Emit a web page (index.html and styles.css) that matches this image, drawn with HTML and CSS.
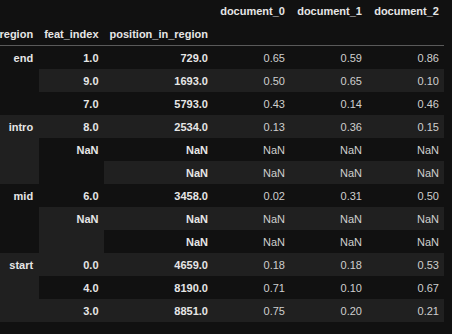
FILE: index.html
```html
<!DOCTYPE html>
<html>
<head>
<meta charset="utf-8">
<link rel="stylesheet" href="styles.css">
</head>
<body>
<table class="df">
  <thead>
    <tr>
      <th></th><th></th><th></th>
      <th class="doc">document_0</th><th class="doc">document_1</th><th class="doc">document_2</th>
    </tr>
    <tr>
      <th>region</th><th>feat_index</th><th>position_in_region</th>
      <th></th><th></th><th></th>
    </tr>
  </thead>
  <tbody>
    <tr><th rowspan="3">end</th><th>1.0</th><th>729.0</th><td>0.65</td><td>0.59</td><td>0.86</td></tr>
    <tr><th>9.0</th><th>1693.0</th><td>0.50</td><td>0.65</td><td>0.10</td></tr>
    <tr><th>7.0</th><th>5793.0</th><td>0.43</td><td>0.14</td><td>0.46</td></tr>
    <tr><th rowspan="3">intro</th><th>8.0</th><th>2534.0</th><td>0.13</td><td>0.36</td><td>0.15</td></tr>
    <tr><th rowspan="2">NaN</th><th>NaN</th><td>NaN</td><td>NaN</td><td>NaN</td></tr>
    <tr><th>NaN</th><td>NaN</td><td>NaN</td><td>NaN</td></tr>
    <tr><th rowspan="3">mid</th><th>6.0</th><th>3458.0</th><td>0.02</td><td>0.31</td><td>0.50</td></tr>
    <tr><th rowspan="2">NaN</th><th>NaN</th><td>NaN</td><td>NaN</td><td>NaN</td></tr>
    <tr><th>NaN</th><td>NaN</td><td>NaN</td><td>NaN</td></tr>
    <tr><th rowspan="3">start</th><th>0.0</th><th>4659.0</th><td>0.18</td><td>0.18</td><td>0.53</td></tr>
    <tr><th>4.0</th><th>8190.0</th><td>0.71</td><td>0.10</td><td>0.67</td></tr>
    <tr><th>3.0</th><th>8851.0</th><td>0.75</td><td>0.20</td><td>0.21</td></tr>
  </tbody>
</table>
</body>
</html>
```
FILE: styles.css
```css
html, body {
  margin: 0;
  background: #111111;
}
body {
  font-family: "Liberation Sans", Arial, sans-serif;
  font-size: 11px;
  color: #e0e0e0;
  overflow: hidden;
}
.df {
  border-collapse: collapse;
  border-spacing: 0;
  margin: -1px 0 0 -6px;
}
.df th, .df td {
  text-align: right;
  vertical-align: middle;
  padding: 0.5em;
  line-height: normal;
  white-space: nowrap;
}
.df th {
  font-weight: bold;
  color: #e6e6e6;
}
.df td {
  color: #cfcfcf;
}
.df th.doc {
  width: 66px;
}
.df thead {
  border-bottom: 1px solid #5a5a5a;
}
.df tbody th {
  vertical-align: top;
}
.df tbody tr:nth-child(even) {
  background: #202020;
}
```
